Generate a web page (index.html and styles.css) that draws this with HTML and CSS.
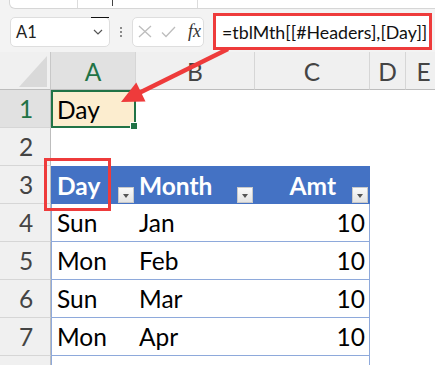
FILE: index.html
```html
<!DOCTYPE html>
<html>
<head>
<meta charset="utf-8">
<link rel="stylesheet" href="styles.css">
</head>
<body>
<div class="app">
  <div class="strip">
    <span class="strip-sep s1"></span>
    <span class="strip-cursor"></span>
    <span class="strip-sep s2"></span>
  </div>
  <div class="fbar">
    <div class="namebox">
      <span class="nb-text">A1</span>
      <svg class="chev" width="10" height="6" viewBox="0 0 10 6"><path d="M1 1 L5 5 L9 1" fill="none" stroke="#555" stroke-width="1.2"/></svg>
    </div>
    <div class="dots"><i></i><i></i><i></i></div>
    <div class="fxbox">
      <svg width="14" height="13" viewBox="0 0 14 13"><path d="M1 1 L13 12 M13 1 L1 12" fill="none" stroke="#bdbdbd" stroke-width="1.3"/></svg>
      <svg width="15" height="12" viewBox="0 0 15 12"><path d="M1 6.5 L5 10.5 L14 1" fill="none" stroke="#bdbdbd" stroke-width="1.3"/></svg>
      <span class="fx">fx</span>
    </div>
    <div class="formula">=tblMth[[#Headers],[Day]]</div>
  </div>

  <div class="sheet">
    <div class="corner"><span class="tri"></span></div>
    <div class="ch sel">A</div>
    <div class="ch">B</div>
    <div class="ch">C</div>
    <div class="ch">D</div>
    <div class="ch">E</div>

    <div class="rh sel">1</div>
    <div class="c active">Day</div>
    <div class="c"></div><div class="c"></div><div class="c"></div><div class="c"></div>

    <div class="rh">2</div>
    <div class="c"></div><div class="c"></div><div class="c"></div><div class="c"></div><div class="c"></div>

    <div class="rh">3</div>
    <div class="c th th-a">Day<span class="dd"></span></div>
    <div class="c th th-b">Month<span class="dd"></span></div>
    <div class="c th th-c">Amt<span class="dd"></span></div>
    <div class="c"></div><div class="c"></div>

    <div class="rh">4</div>
    <div class="c td ta">Sun</div><div class="c td tb">Jan</div><div class="c td tc">10</div>
    <div class="c"></div><div class="c"></div>

    <div class="rh">5</div>
    <div class="c td ta">Mon</div><div class="c td tb">Feb</div><div class="c td tc">10</div>
    <div class="c"></div><div class="c"></div>

    <div class="rh">6</div>
    <div class="c td ta">Sun</div><div class="c td tb">Mar</div><div class="c td tc">10</div>
    <div class="c"></div><div class="c"></div>

    <div class="rh">7</div>
    <div class="c td ta">Mon</div><div class="c td tb">Apr</div><div class="c td tc">10</div>
    <div class="c"></div><div class="c"></div>

    <div class="rh"></div>
    <div class="c td ta"></div><div class="c td tb"></div><div class="c td tc"></div>
    <div class="c"></div><div class="c"></div>
  </div>

  <div class="callout"></div>
  <svg class="arrow" width="435" height="365" viewBox="0 0 435 365">
    <line x1="228" y1="49" x2="138" y2="93.5" stroke="#ee3b3b" stroke-width="4.5"/>
    <polygon points="121,102 136.3,82.5 145.5,101.5" fill="#ee3b3b"/>
  </svg>
</div>
</body>
</html>
```

FILE: styles.css
```css
* { box-sizing: border-box; }
html, body { margin: 0; padding: 0; }
body {
  width: 435px;
  height: 365px;
  overflow: hidden;
  background: #f3f3f3;
  font-family: Lato, "Liberation Sans", sans-serif;
}
.app {
  position: relative;
  width: 435px;
  height: 365px;
  overflow: hidden;
}

/* top strip */
.strip {
  position: relative;
  margin-left: 9px;
  width: 440px;
  height: 9px;
  background: #fff;
  border: 1px solid #d6d6d6;
  border-top: none;
  border-radius: 0 0 6px 6px;
}
.strip-sep {
  position: absolute;
  top: 0;
  width: 1px;
  height: 8px;
  background: #dcdcdc;
}
.s1 { left: 67px; }
.s2 { left: 187px; }
.strip-cursor {
  position: absolute;
  left: 102px;
  top: 0;
  width: 1px;
  height: 6px;
  background: #444;
}

/* formula bar */
.fbar {
  display: flex;
  align-items: center;
  height: 37px;
  margin-top: 4px;
  padding-left: 10px;
}
.namebox {
  position: relative;
  width: 100px;
  height: 30px;
  background: #fff;
  border: 1px solid #dedede;
  border-radius: 5px;
  display: flex;
  align-items: center;
  justify-content: space-between;
  padding: 0 6px 0 5px;
}
.namebox::before {
  content: "";
  position: absolute;
  left: 80px;
  top: -1px;
  width: 18px;
  height: 1.5px;
  background: #111;
}
.nb-text {
  font-size: 16.5px;
  color: #222;
}
.chev { margin-top: 1px; }
.dots {
  width: 22px;
  display: flex;
  flex-direction: column;
  align-items: center;
  gap: 2px;
}
.dots i {
  display: block;
  width: 2px;
  height: 2px;
  background: #8a8a8a;
}
.fxbox {
  width: 72px;
  height: 30px;
  background: #fff;
  border: 1px solid #dedede;
  border-radius: 5px;
  display: flex;
  align-items: center;
  padding-left: 5px;
  gap: 9px;
}
.fx {
  font-family: "Liberation Serif", serif;
  font-style: italic;
  font-size: 18px;
  color: #333;
  margin-left: 3px;
}
.formula {
  margin-left: 9px;
  width: 219px;
  height: 37px;
  background: #fff;
  border: 3px solid #ee3b3b;
  display: flex;
  align-items: center;
  padding-left: 6px;
  font-size: 17.8px;
  color: #111;
  white-space: nowrap;
  overflow: hidden;
}

/* sheet grid */
.sheet {
  margin-top: 2px;
  display: grid;
  grid-template-columns: 51px 85px 119px 115px 36px 36px;
  grid-auto-rows: 38px;
  background: #fff;
}
.corner {
  position: relative;
  background: #f0f0f0;
  border-right: 1px solid #c8c8c8;
  border-bottom: 1px solid #bdbdbd;
}
.tri {
  position: absolute;
  right: 3px;
  bottom: 2px;
  width: 0;
  height: 0;
  border-style: solid;
  border-width: 0 0 31px 28px;
  border-color: transparent transparent #d9d9d9 transparent;
}
.ch {
  background: #f0f0f0;
  border-right: 1px solid #d6d6d6;
  border-bottom: 1px solid #bdbdbd;
  display: flex;
  align-items: center;
  justify-content: center;
  font-size: 24.5px;
  color: #444;
  padding-top: 2px;
}
.ch.sel {
  background: #e1e1e1;
  color: #217346;
}
.rh {
  background: #f0f0f0;
  border-right: 1px solid #bdbdbd;
  border-bottom: 1px solid #d6d6d6;
  display: flex;
  align-items: center;
  justify-content: center;
  font-size: 24.5px;
  color: #444;
  padding-left: 2px;
}
.rh.sel {
  background: #e1e1e1;
  color: #217346;
}
.c {
  position: relative;
  display: flex;
  align-items: center;
  font-size: 24.5px;
  color: #000;
  white-space: nowrap;
}
.active {
  background: #fcedcf;
  border: 2px solid #217346;
  padding-left: 4px;
}
.active::after {
  content: "";
  position: absolute;
  right: -4px;
  bottom: -4px;
  width: 6px;
  height: 6px;
  background: #217346;
  border: 1px solid #fff;
}

/* table */
.th {
  background: #4472c4;
  color: #fff;
  font-weight: 700;
}
.th-a { padding-left: 6px; }
.th-b { padding-left: 3px; }
.th-c { justify-content: flex-end; padding-right: 34px; }
.dd {
  position: absolute;
  right: 2px;
  bottom: 1px;
  width: 16px;
  height: 16px;
  background: linear-gradient(#fafafa, #e4e4e4);
  border: 1px solid #c9c9c9;
}
.dd::after {
  content: "";
  position: absolute;
  left: 4px;
  top: 6px;
  border-style: solid;
  border-width: 4px 3.5px 0 3.5px;
  border-color: #555 transparent transparent transparent;
}
.td { border-bottom: 1px solid #8ea9db; }
.ta { border-left: 1px solid #8ea9db; padding-left: 5px; }
.tb { padding-left: 3px; }
.tc { border-right: 1px solid #8ea9db; justify-content: flex-end; padding-right: 4px; }

/* annotations */
.callout {
  position: absolute;
  left: 44px;
  top: 158px;
  width: 67px;
  height: 53px;
  border: 3px solid #ee3b3b;
}
.arrow {
  position: absolute;
  left: 0;
  top: 0;
  pointer-events: none;
}
```
